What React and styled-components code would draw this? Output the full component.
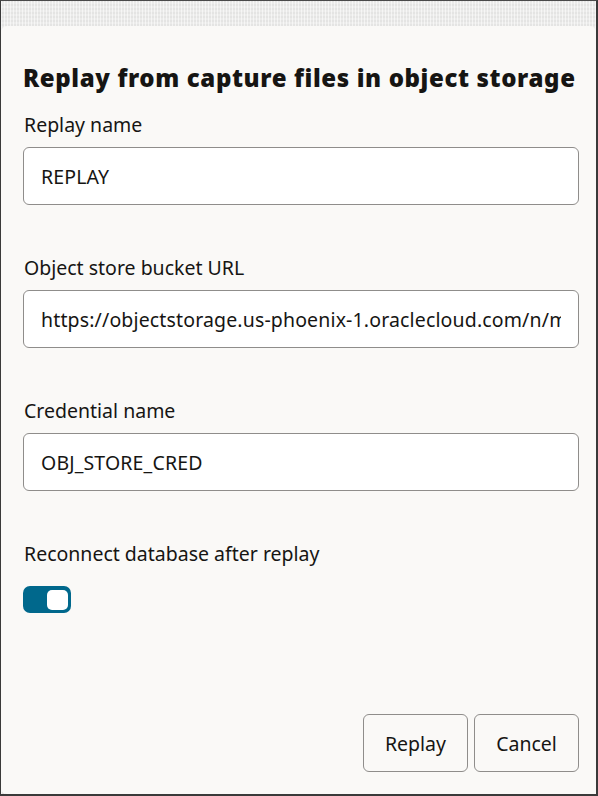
import styled, { createGlobalStyle } from 'styled-components'

const GlobalStyle = createGlobalStyle`
    html, body {
        margin: 0;
        padding: 0;
    }
    body {
        font-family: "Noto Sans", "Open Sans", sans-serif;
        color: #161513;
    }
    * {
        box-sizing: border-box;
    }
`

const Frame = styled.div`
    width: 598px;
    height: 796px;
    display: flex;
    flex-direction: column;
    border-top: 1px solid #4a4a4a;
    border-left: 1px solid #3a3a3a;
    border-right: 2px solid #3a3a3a;
    border-bottom: 2px solid #3a3a3a;
    background-color: #ebebea;
    background-image:
        repeating-linear-gradient(90deg, rgba(255,255,255,0.55) 0 1px, transparent 1px 3px),
        repeating-linear-gradient(0deg, rgba(0,0,0,0.03) 0 2px, transparent 2px 4px);
`
const Backdrop = styled.div`
    height: 25px;
    flex-shrink: 0;
`
const Dialog = styled.div`
    flex: 1;
    display: flex;
    flex-direction: column;
    background: #faf9f7;
    border-radius: 6px 6px 0 6px;
    padding: 36px 17px 22px 22px;
`
const Title = styled.h1`
    margin: 0 0 19px;
    font-family: "Noto Sans", "Open Sans", sans-serif;
    font-weight: 900;
    font-size: 24px;
    line-height: 32px;
    letter-spacing: 0.62px;
    white-space: nowrap;
`
const Field = styled.div`
    display: flex;
    flex-direction: column;
    margin-bottom: ${({ $last }) => ($last ? '0' : '51px')};
`
const Label = styled.label`
    font-size: 19.5px;
    line-height: 24px;
    margin-bottom: 10px;
    padding-left: 1px;
`
const Input = styled.input`
    height: 58px;
    width: 100%;
    border: 1px solid #8f8d8b;
    border-radius: 6px;
    background: #fff;
    padding: 0 17px;
    font-family: inherit;
    font-size: 19.5px;
    letter-spacing: 0.15px;
    color: #161513;
    outline: none;
`
const Toggle = styled.button`
    margin-top: 10px;
    width: 48px;
    height: 27px;
    border: none;
    border-radius: 7px;
    background: #00688c;
    padding: 0 3px;
    display: flex;
    align-items: center;
    justify-content: ${({ $on }) => ($on ? 'flex-end' : 'flex-start')};
    cursor: pointer;
`
const Knob = styled.span`
    width: 21px;
    height: 20px;
    border-radius: 5px;
    background: #fff;
`
const Footer = styled.div`
    margin-top: auto;
    display: flex;
    justify-content: flex-end;
    gap: 6px;
`
const Button = styled.button`
    width: 105px;
    height: 58px;
    border: 1px solid #8f8d8b;
    border-radius: 6px;
    background: transparent;
    font-family: inherit;
    font-size: 19.5px;
    color: #161513;
    cursor: pointer;
`

const fields = [
    { label: 'Replay name', value: 'REPLAY' },
    { label: 'Object store bucket URL', value: 'https://objectstorage.us-phoenix-1.oraclecloud.com/n/mytenancy/b/capture-bucket/o' },
    { label: 'Credential name', value: 'OBJ_STORE_CRED' },
]

const App = () => {
    return (
        <>
            <GlobalStyle />
            <Frame>
                <Backdrop />
                <Dialog>
                    <Title>Replay from capture files in object storage</Title>
                    {fields.map((f) => (
                        <Field key={f.label}>
                            <Label>{f.label}</Label>
                            <Input defaultValue={f.value} />
                        </Field>
                    ))}
                    <Field $last>
                        <Label>Reconnect database after replay</Label>
                        <Toggle $on aria-pressed="true">
                            <Knob />
                        </Toggle>
                    </Field>
                    <Footer>
                        <Button>Replay</Button>
                        <Button>Cancel</Button>
                    </Footer>
                </Dialog>
            </Frame>
        </>
    )
}

export default App
